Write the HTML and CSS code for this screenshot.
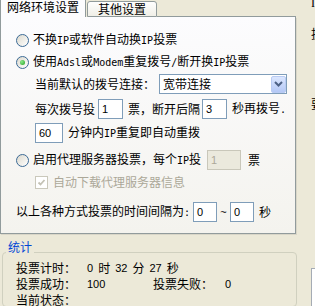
FILE: index.html
```html
<!DOCTYPE html>
<html>
<head>
<title>网络环境设置</title>
<link rel="stylesheet" href="styles.css">
</head>
<body>
<div class="window">
  <div class="main">
    <div class="tabs">
      <div class="tab tab-active">网络环境设置</div>
      <div class="tab">其他设置</div>
      <div class="tab-fill"></div>
    </div>

    <div class="panel">
      <div class="row">
        <span class="radio"></span>
        <span>不换<span class="en">IP</span>或软件自动换<span class="en">IP</span>投票</span>
      </div>
      <div class="row row-2">
        <span class="radio checked"></span>
        <span>使用<span class="en">Adsl</span>或<span class="en">Modem</span>重复拨号<span class="en">/</span>断开换<span class="en">IP</span>投票</span>
      </div>
      <div class="row row-3 indent">
        <span>当前默认的拨号连接：</span>
        <div class="select">
          <span>宽带连接</span>
          <span class="select-btn">
            <svg width="9" height="6" viewBox="0 0 9 6"><polyline points="1,1 4.5,4.5 8,1" fill="none" stroke="#4d6185" stroke-width="2"/></svg>
          </span>
        </div>
      </div>
      <div class="row row-4 indent">
        <span>每次拨号投</span>
        <span class="field w25 ml3">1</span>
        <span class="ml5">票，断开后隔</span>
        <span class="field w25 ml2">3</span>
        <span class="ml5">秒再拨号<span class="en">.</span></span>
      </div>
      <div class="row row-5 indent">
        <span class="field w28">60</span>
        <span class="ml5">分钟内<span class="en">IP</span>重复即自动重拨</span>
      </div>
      <div class="row row-6">
        <span class="radio"></span>
        <span>启用代理服务器投票，每个<span class="en">IP</span>投</span>
        <span class="field field-off w34 ml6">1</span>
        <span class="ml7">票</span>
      </div>
      <div class="row row-7 indent">
        <span class="check">
          <svg width="11" height="11" viewBox="0 0 11 11"><polyline points="2.5,5.5 4.5,7.5 8.5,3" fill="none" stroke="#c4c2b5" stroke-width="1.8"/></svg>
        </span>
        <span class="off ml5">自动下载代理服务器信息</span>
      </div>
      <div class="row row-8">
        <span>以上各种方式投票的时间间隔为<span class="en">:</span></span>
        <span class="field w24 ml3">0</span>
        <span class="tilde">~</span>
        <span class="field w24">0</span>
        <span class="ml5">秒</span>
      </div>
    </div>

    <div class="group">
      <div class="group-title">统计</div>
      <div class="stats">
        <div class="stat-row">
          <span class="stat-label">投票计时：</span>
          <span class="stat-time">
            <span class="num">0</span><span>时</span><span class="num">32</span><span>分</span><span class="num">27</span><span>秒</span>
          </span>
        </div>
        <div class="stat-row">
          <span class="stat-label">投票成功：</span>
          <span class="stat-value num">100</span>
          <span class="stat-label2">投票失败：</span>
          <span class="num">0</span>
        </div>
        <div class="stat-row">
          <span class="stat-label">当前状态：</span>
        </div>
      </div>
    </div>
  </div>

  <div class="side">
    <span class="side-i">I</span>
    <span class="side-1">投</span>
    <span class="side-2">要</span>
    <span class="side-box"></span>
  </div>
</div>
</body>
</html>
```

FILE: styles.css
```css
* {
    box-sizing: border-box;
}

body {
    margin: 0;
    height: 306px;
    overflow: hidden;
    background-color: #ece9d8;
    font-family: "Noto Sans CJK SC", sans-serif;
    font-size: 12px;
    line-height: 14px;
    color: #000;
}

.window {
    display: flex;
    height: 306px;
    overflow: hidden;
}

.main {
    width: 297px;
    flex: none;
}

/* tabs */
.tabs {
    display: flex;
    width: 296px;
    height: 17px;
}

.tab {
    width: 70px;
    height: 16px;
    margin: 1px 0 0 1px;
    border: 1px solid #919b9c;
    border-radius: 3px 3px 0 0;
    background: linear-gradient(#fefefe, #f0efe7);
    text-align: center;
}

.tab-active {
    width: 86px;
    height: 17px;
    margin: 0;
    border: none;
    border-left: 1px solid #919b9c;
    border-right: 1px solid #919b9c;
    border-radius: 0;
    background: #fcfcfe;
    padding-left: 6px;
    text-align: left;
}

.tab-fill {
    flex: 1;
    border-bottom: 1px solid #919b9c;
}

/* panel */
.panel {
    width: 296px;
    border: 1px solid #919b9c;
    border-top: none;
    background: linear-gradient(#fcfcfe, #f4f3ee);
    box-shadow: 1px 1px 0 #d9d6c8;
    padding: 13px 0 11px 15px;
}

.row {
    display: flex;
    align-items: center;
    height: 20px;
    white-space: nowrap;
}

.row-2 { margin-top: 2px; }
.row-3 { margin-top: 2px; }
.row-4 { margin-top: 5px; }
.row-5 { margin-top: 4px; }
.row-6 { margin-top: 7px; }
.row-7 { margin-top: 2px; }
.row-8 { margin-top: 10px; }

.indent {
    padding-left: 19px;
}

.en {
    font-family: "DejaVu Sans Mono", monospace;
    font-size: 10px;
}

.ml2 { margin-left: 2px; }
.ml3 { margin-left: 3px; }
.ml5 { margin-left: 5px; }
.ml6 { margin-left: 6px; }
.ml7 { margin-left: 7px; }

.radio {
    width: 13px;
    height: 13px;
    flex: none;
    margin-right: 4px;
    border: 1px solid #3b6a96;
    border-radius: 50%;
    background: linear-gradient(135deg, #dcd9cd, #ffffff);
    display: flex;
    align-items: center;
    justify-content: center;
}

.radio.checked::after {
    content: "";
    width: 5px;
    height: 5px;
    border-radius: 50%;
    background: radial-gradient(circle at 35% 35%, #8be88a, #21a121);
}

.check {
    width: 13px;
    height: 13px;
    flex: none;
    border: 1px solid #cac8bb;
    background: #fff;
    display: flex;
    align-items: center;
    justify-content: center;
}

.off {
    color: #aca899;
}

/* inputs */
.field {
    height: 20px;
    flex: none;
    border: 1px solid #7f9db9;
    background: #fff;
    padding-left: 3px;
    display: flex;
    align-items: center;
    font-family: "Liberation Sans", sans-serif;
    font-size: 11px;
}

.field-off {
    border-color: #c9c7ba;
    background: #ebe9dd;
    color: #aca899;
}

.w24 { width: 24px; }
.w25 { width: 25px; }
.w28 { width: 28px; }
.w34 { width: 34px; }

.tilde {
    width: 13px;
    text-align: center;
    font-family: "Liberation Sans", sans-serif;
    font-size: 11px;
}

.select {
    width: 128px;
    height: 20px;
    margin-left: 4px;
    border: 1px solid #7f9db9;
    background: #fff;
    padding-left: 3px;
    display: flex;
    align-items: center;
    justify-content: space-between;
}

.select-btn {
    width: 15px;
    height: 17px;
    border: 1px solid #b9cbf3;
    border-radius: 2px;
    background: linear-gradient(#dbe6fe, #b4c8f6);
    display: flex;
    align-items: center;
    justify-content: center;
}

/* stats group */
.group {
    width: 295px;
    height: 55px;
    margin: 18px 0 0 2px;
    border: 1px solid #d0d0bf;
    border-radius: 4px;
}

.group-title {
    width: fit-content;
    margin: -13px 0 0 3px;
    padding: 0 2px;
    background: #ece9d8;
    color: #0046d5;
}

.stats {
    padding: 6px 0 0 13px;
}

.stat-row {
    display: flex;
    align-items: center;
    height: 16px;
    white-space: nowrap;
}

.stat-label {
    width: 71px;
}

.stat-label2 {
    width: 72px;
}

.stat-value {
    width: 66px;
}

.stat-time {
    display: flex;
    gap: 5px;
}

.num {
    font-family: "Liberation Sans", sans-serif;
    font-size: 11px;
}

/* clipped part of the window on the right */
.side {
    flex: 1;
    overflow: hidden;
    padding-left: 14px;
    display: flex;
    flex-direction: column;
    align-items: flex-start;
    line-height: 12px;
}

.side-i {
    margin-top: -3px;
    font-family: "Liberation Serif", serif;
}

.side-1 { margin-top: 19px; }
.side-2 { margin-top: 58px; }

.side-box {
    width: 30px;
    height: 40px;
    flex: none;
    margin-top: 158px;
    border: 1px solid #a5acb5;
    background: #fff;
}
```
